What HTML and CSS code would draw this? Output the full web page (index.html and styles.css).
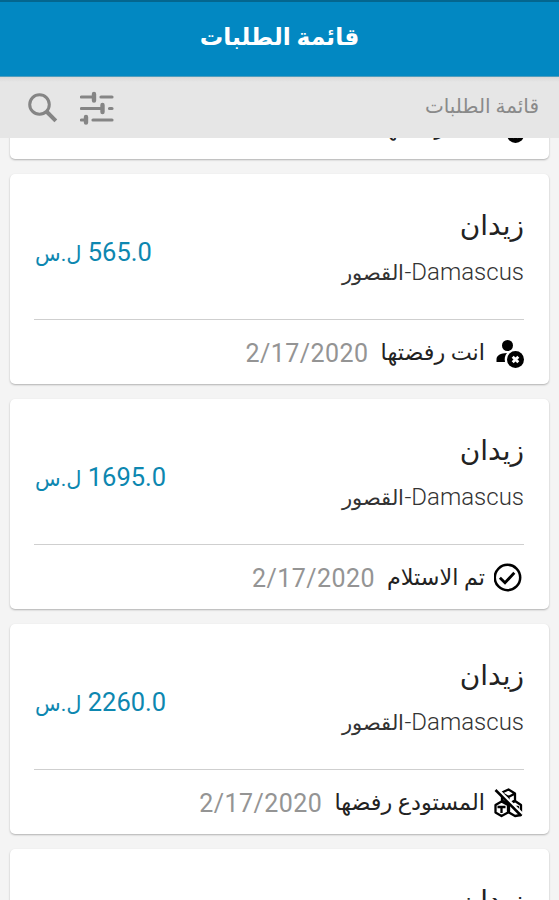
FILE: index.html
```html
<!DOCTYPE html>
<html lang="ar" dir="rtl">
<head>
    <meta charset="UTF-8">
    <title>قائمة الطلبات</title>
    <link rel="stylesheet" href="styles.css">
</head>
<body>
<svg width="0" height="0" class="defs">
    <symbol id="user-x" viewBox="0 0 30 30">
        <circle cx="13.500" cy="7.500" r="5.500"/>
        <path d="M2.500 24v-2.500C2.500 17.500 6.500 15.300 13 15.100C10.800 17.500 10.300 21 11 24z"/>
        <circle cx="21.500" cy="21.500" r="8.500"/>
        <path d="M18.700 18.700l5.600 5.600M24.300 18.700l-5.600 5.600" stroke="#fff" stroke-width="2.800"/>
    </symbol>
    <symbol id="check" viewBox="0 0 30 30">
        <circle cx="13.500" cy="14.500" r="12.700" fill="none" stroke="#000" stroke-width="2.500"/>
        <path d="M5.900 14.700l5.100 5.100L20.300 9.800" fill="none" stroke="#000" stroke-width="2.800"/>
    </symbol>
    <symbol id="boxes-off" viewBox="0 0 30 30">
        <g fill="none" stroke="#000" stroke-width="2.300" stroke-linejoin="round">
            <path d="M8 4.500L14.500 1.500l6.500 4v7L14.500 16L8 12.500zM8.500 5.500l6 3.500L21 5.500M14.500 9v6"/>
            <path d="M7.500 13.500L1.500 17v7.500L7.500 28l6.500-3.500V17zM3.500 19h8M7.500 19v6"/>
            <path d="M21 13L15 17v7.500L21 28l6-1V17zM19 19h5v4"/>
        </g>
        <path d="M3.500 1L28.500 26" stroke="#fff" stroke-width="2.600"/>
        <path d="M1.500 2L27 27.500" stroke="#000" stroke-width="2.600"/>
    </symbol>
</svg>
<div class="status-bar"></div>
<header class="header"><h1>قائمة الطلبات</h1></header>
<div class="toolbar">
    <span class="toolbar-title">قائمة الطلبات</span>
    <svg class="filter" viewBox="0 0 34 34" stroke="#858585" fill="none" stroke-linecap="round">
        <path d="M1.500 6h12M21 6h11M1.500 17.500h20M29.500 17.500h2.500M1.500 29h4M13 29h19" stroke-width="3.200"/>
        <path d="M14 3v6.500M22.500 14v7M6 26v5.500" stroke-width="4.400"/>
    </svg>
    <svg class="search" viewBox="0 0 30 30" stroke="#858585" fill="none">
        <circle cx="11.500" cy="11.500" r="9.800" stroke-width="3"/>
        <path d="M18.500 18.500l9.300 9.300" stroke-width="4"/>
    </svg>
</div>
<main class="list">
    <section class="card">
        <div class="info">
            <div>
                <h2>زيدان</h2>
                <p class="address">Damascus-<span>القصور</span></p>
            </div>
            <p class="price"><b>565.0</b> <span>ل.س</span></p>
        </div>
        <div class="state">
            <svg><use href="#user-x"/></svg>
            <span class="label">انت رفضتها</span>
            <span class="date">2/17/2020</span>
        </div>
    </section>
    <section class="card">
        <div class="info">
            <div>
                <h2>زيدان</h2>
                <p class="address">Damascus-<span>القصور</span></p>
            </div>
            <p class="price"><b>565.0</b> <span>ل.س</span></p>
        </div>
        <div class="state">
            <svg><use href="#user-x"/></svg>
            <span class="label">انت رفضتها</span>
            <span class="date">2/17/2020</span>
        </div>
    </section>
    <section class="card">
        <div class="info">
            <div>
                <h2>زيدان</h2>
                <p class="address">Damascus-<span>القصور</span></p>
            </div>
            <p class="price"><b>1695.0</b> <span>ل.س</span></p>
        </div>
        <div class="state">
            <svg><use href="#check"/></svg>
            <span class="label">تم الاستلام</span>
            <span class="date">2/17/2020</span>
        </div>
    </section>
    <section class="card">
        <div class="info">
            <div>
                <h2>زيدان</h2>
                <p class="address">Damascus-<span>القصور</span></p>
            </div>
            <p class="price"><b>2260.0</b> <span>ل.س</span></p>
        </div>
        <div class="state">
            <svg><use href="#boxes-off"/></svg>
            <span class="label">المستودع رفضها</span>
            <span class="date">2/17/2020</span>
        </div>
    </section>
    <section class="card">
        <div class="info">
            <div>
                <h2>زيدان</h2>
            </div>
        </div>
    </section>
</main>
</body>
</html>
```
FILE: styles.css
```css
*{
    margin: 0;
    padding: 0;
    box-sizing: border-box;
}
body{
    display: flex;
    flex-direction: column;
    height: 900px;
    overflow: hidden;
    background-color: #f4f4f4;
    font-family: Roboto, "DejaVu Sans", sans-serif;
}
.defs{
    display: none;
}
.status-bar{
    flex: none;
    height: 2px;
    background-color: #04668f;
}
.header{
    flex: none;
    height: 75px;
    background-color: #0288c2;
    border-bottom: 1px solid #4f9dbd;
    text-align: center;
}
.header h1{
    font-size: 23.4px;
    line-height: 70px;
    color: white;
}
.toolbar{
    flex: none;
    display: flex;
    align-items: center;
    height: 61px;
    padding: 0 20px 0 28px;
    background: linear-gradient(#d8d8d8, #e6e6e6 5px);
}
.toolbar-title{
    flex: 1;
    padding-bottom: 4px;
    font-size: 20px;
    color: #8a8a8a;
}
.filter{
    width: 34px;
    height: 34px;
    margin-left: 22px;
}
.search{
    width: 30px;
    height: 30px;
}
.list{
    flex: 1;
    min-height: 0;
    overflow: hidden;
    padding: 0 10px;
}
.card{
    height: 210px;
    margin-bottom: 15px;
    padding: 0 25px 0 24px;
    background-color: white;
    border-radius: 5px;
    box-shadow: 0 1px 2px rgba(0,0,0,0.28);
}
/*列表已向上滚动*/
.card:first-child{
    margin-top: -189px;
}
.info{
    display: flex;
    justify-content: space-between;
    height: 146px;
    border-bottom: 1px solid #cfcfcf;
}
.info h2{
    padding-top: 31px;
    font-size: 28px;
    font-weight: normal;
    line-height: 42px;
    color: #222;
}
.address{
    font-size: 24px;
    font-weight: 300;
    line-height: 50px;
    color: #333;
}
.address span{
    font-size: 21px;
}
.price{
    padding: 58px 0 0 1px;
    font-size: 25.5px;
    line-height: 40px;
    color: #0d87b0;
}
.price b{
    font-weight: normal;
}
.price span{
    font-size: 21px;
}
.state{
    display: flex;
    align-items: center;
    height: 66px;
}
.state svg{
    width: 30px;
    height: 30px;
}
.label{
    margin: 0 13px 0 12px;
    margin-right: 9px;
    padding-bottom: 2px;
    font-size: 22.3px;
    color: #222;
}
.date{
    font-size: 25px;
    letter-spacing: 0.45px;
    color: #949494;
}
```
